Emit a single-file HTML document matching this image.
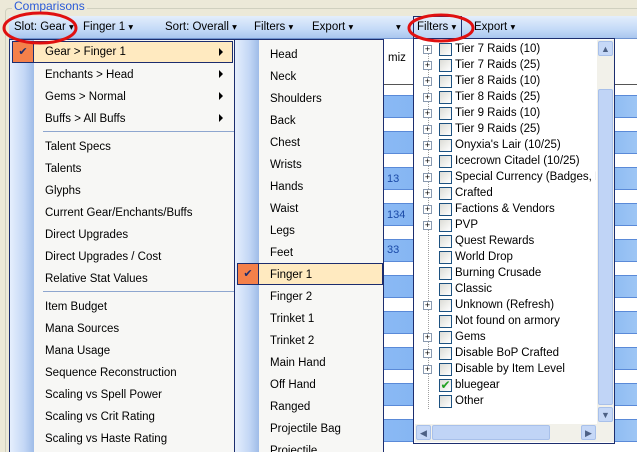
<!DOCTYPE html>
<html style="width:637px;height:452px;overflow:hidden"><head><style>
*{margin:0;padding:0;box-sizing:border-box}
body{width:637px;height:452px;overflow:hidden;background:#ece9d8;font-family:"Liberation Sans",sans-serif;font-size:11.5px;position:relative}
.abs{position:absolute}
.tb{left:9px;top:16px;width:628px;height:23px;background:linear-gradient(#e3eefc,#c4daf7 60%,#a9c6ef);border-bottom:1px solid #6f93cf}
.tb span{position:absolute;top:5px;color:#000;white-space:nowrap}
.grid{left:383px;top:39px;width:254px;height:413px;background:#fff;border-left:1px solid #7f9db9}
.band{position:absolute;left:0;width:254px;height:23px;background:linear-gradient(90deg,#8ab9f4,#6fa6ec 70%,#9ec6f5);border-top:1px solid #5a8ad8;border-bottom:1px solid #5a8ad8}
.menu{background:#f7f7f5;border:1px solid #1c2d6e;border-bottom:none}
.strip{position:absolute;left:0;top:0;bottom:0;width:24px;background:linear-gradient(90deg,#e6effd,#c3d7f5 60%,#9fbce8)}
.it{position:absolute;white-space:nowrap;color:#000;padding-top:2px}
.sep{position:absolute;height:1px;background:#8ea6cf}
.hl{position:absolute;background:#ffeac0;border:1px solid #1c2d6e}
.ck{position:absolute;background:#f4804a;border:1px solid #1c2d6e;color:#1c2d6e;text-align:center;font-size:11px;line-height:20px}
.arr{position:absolute;width:0;height:0;border-top:4px solid transparent;border-bottom:4px solid transparent;border-left:4px solid #000}
.fl{left:413px;top:38px;width:202px;height:406px;background:#fff;border:1px solid #1c2d6e}
.fr{position:absolute;left:0;height:16px;width:182px;white-space:nowrap;overflow:hidden}
.pl{position:absolute;left:9px;top:4px;width:9px;height:9px;border:1px solid #8a9ab0;background:#fff;font-size:9px;line-height:7px;text-align:center;color:#000}
.cb{position:absolute;left:25px;top:2px;width:13px;height:13px;border:1px solid #1c5180;background:linear-gradient(135deg,#dcdcd6,#fff)}
.ft{position:absolute;left:41px;top:2px}
</style></head><body>
<div class="abs" style="left:5px;top:8px;width:640px;height:450px;border:1px solid #d0d0bf;border-radius:4px"></div>
<div class="abs" style="left:12px;top:0px;color:#2a5ad8;background:#ece9d8;padding:0 2px;font-size:12px;line-height:12px">Comparisons</div>
<div class="abs tb">
<span style="left:5px">Slot: Gear <small>▾</small></span>
<span style="left:74px">Finger 1 <small>▾</small></span>
<span style="left:156px">Sort: Overall <small>▾</small></span>
<span style="left:245px">Filters <small>▾</small></span>
<span style="left:303px">Export <small>▾</small></span>
<span style="left:387px"><small>▾</small></span>
<span style="left:404px;top:0;width:49px;height:23px;border:1px solid #1c2d6e;background:linear-gradient(#e3eefc,#b9d2f3)"></span>
<span style="left:408px">Filters <small>▾</small></span>
<span style="left:465px">Export <small>▾</small></span>
</div>
<div class="abs grid">
<div class="abs" style="left:4px;top:13px">miz</div>
<div class="abs" style="left:0;top:45px;width:254px;height:1px;background:#555"></div>
<div class="band" style="top:56px"></div><div class="band" style="top:92px"></div><div class="band" style="top:128px"></div><div class="band" style="top:164px"></div><div class="band" style="top:200px"></div><div class="band" style="top:236px"></div><div class="band" style="top:272px"></div><div class="band" style="top:308px"></div><div class="band" style="top:344px"></div><div class="band" style="top:380px"></div>
<div class="abs" style="left:3px;top:134px;color:#1a4aa8;font-size:11px">13</div>
<div class="abs" style="left:3px;top:170px;color:#1a4aa8;font-size:11px">134</div>
<div class="abs" style="left:3px;top:205px;color:#1a4aa8;font-size:11px">33</div>
</div>
<!-- left menu -->
<div class="abs menu" style="left:9px;top:39px;width:226px;height:413px">
<div class="strip"></div>
<div class="hl" style="left:2px;top:1px;width:221px;height:22px"></div>
<div class="ck" style="left:2px;top:1px;width:22px;height:22px">✔</div>
<div class="it" style="left:35px;top:4px">Gear &gt; Finger 1</div><div class="arr" style="left:209px;top:8px"></div>
<div class="it" style="left:35px;top:27px">Enchants &gt; Head</div><div class="arr" style="left:209px;top:30px"></div>
<div class="it" style="left:35px;top:49px">Gems &gt; Normal</div><div class="arr" style="left:209px;top:52px"></div>
<div class="it" style="left:35px;top:71px">Buffs &gt; All Buffs</div><div class="arr" style="left:209px;top:74px"></div>
<div class="sep" style="left:33px;top:91px;width:191px"></div>
<div class="it" style="left:35px;top:99px">Talent Specs</div>
<div class="it" style="left:35px;top:121px">Talents</div>
<div class="it" style="left:35px;top:143px">Glyphs</div>
<div class="it" style="left:35px;top:165px">Current Gear/Enchants/Buffs</div>
<div class="it" style="left:35px;top:187px">Direct Upgrades</div>
<div class="it" style="left:35px;top:209px">Direct Upgrades / Cost</div>
<div class="it" style="left:35px;top:231px">Relative Stat Values</div>
<div class="sep" style="left:33px;top:251px;width:191px"></div>
<div class="it" style="left:35px;top:259px">Item Budget</div>
<div class="it" style="left:35px;top:281px">Mana Sources</div>
<div class="it" style="left:35px;top:303px">Mana Usage</div>
<div class="it" style="left:35px;top:325px">Sequence Reconstruction</div>
<div class="it" style="left:35px;top:347px">Scaling vs Spell Power</div>
<div class="it" style="left:35px;top:369px">Scaling vs Crit Rating</div>
<div class="it" style="left:35px;top:391px">Scaling vs Haste Rating</div>
</div>
<!-- right submenu -->
<div class="abs menu" style="left:234px;top:39px;width:150px;height:413px">
<div class="strip"></div>
<div class="it" style="left:35px;top:7px">Head</div>
<div class="it" style="left:35px;top:29px">Neck</div>
<div class="it" style="left:35px;top:51px">Shoulders</div>
<div class="it" style="left:35px;top:73px">Back</div>
<div class="it" style="left:35px;top:95px">Chest</div>
<div class="it" style="left:35px;top:117px">Wrists</div>
<div class="it" style="left:35px;top:139px">Hands</div>
<div class="it" style="left:35px;top:161px">Waist</div>
<div class="it" style="left:35px;top:183px">Legs</div>
<div class="it" style="left:35px;top:205px">Feet</div>
<div class="hl" style="left:2px;top:223px;width:146px;height:22px"></div>
<div class="ck" style="left:2px;top:223px;width:22px;height:22px">✔</div>
<div class="it" style="left:35px;top:227px">Finger 1</div>
<div class="it" style="left:35px;top:249px">Finger 2</div>
<div class="it" style="left:35px;top:271px">Trinket 1</div>
<div class="it" style="left:35px;top:293px">Trinket 2</div>
<div class="it" style="left:35px;top:315px">Main Hand</div>
<div class="it" style="left:35px;top:337px">Off Hand</div>
<div class="it" style="left:35px;top:359px">Ranged</div>
<div class="it" style="left:35px;top:381px">Projectile Bag</div>
<div class="it" style="left:35px;top:403px">Projectile</div>
</div>
<!-- filters dropdown -->
<div class="abs fl">
<div class="abs" style="left:14px;top:8px;height:362px;border-left:1px dotted #a0a0a0"></div>
<div class="fr" style="top:2px"><div class="pl">+</div><div class="cb"></div><div class="ft">Tier 7 Raids (10)</div></div>
<div class="fr" style="top:18px"><div class="pl">+</div><div class="cb"></div><div class="ft">Tier 7 Raids (25)</div></div>
<div class="fr" style="top:34px"><div class="pl">+</div><div class="cb"></div><div class="ft">Tier 8 Raids (10)</div></div>
<div class="fr" style="top:50px"><div class="pl">+</div><div class="cb"></div><div class="ft">Tier 8 Raids (25)</div></div>
<div class="fr" style="top:66px"><div class="pl">+</div><div class="cb"></div><div class="ft">Tier 9 Raids (10)</div></div>
<div class="fr" style="top:82px"><div class="pl">+</div><div class="cb"></div><div class="ft">Tier 9 Raids (25)</div></div>
<div class="fr" style="top:98px"><div class="pl">+</div><div class="cb"></div><div class="ft">Onyxia's Lair (10/25)</div></div>
<div class="fr" style="top:114px"><div class="pl">+</div><div class="cb"></div><div class="ft">Icecrown Citadel (10/25)</div></div>
<div class="fr" style="top:130px"><div class="pl">+</div><div class="cb"></div><div class="ft">Special Currency (Badges, Rir</div></div>
<div class="fr" style="top:146px"><div class="pl">+</div><div class="cb"></div><div class="ft">Crafted</div></div>
<div class="fr" style="top:162px"><div class="pl">+</div><div class="cb"></div><div class="ft">Factions &amp; Vendors</div></div>
<div class="fr" style="top:178px"><div class="pl">+</div><div class="cb"></div><div class="ft">PVP</div></div>
<div class="fr" style="top:194px"><div class="cb"></div><div class="ft">Quest Rewards</div></div>
<div class="fr" style="top:210px"><div class="cb"></div><div class="ft">World Drop</div></div>
<div class="fr" style="top:226px"><div class="cb"></div><div class="ft">Burning Crusade</div></div>
<div class="fr" style="top:242px"><div class="cb"></div><div class="ft">Classic</div></div>
<div class="fr" style="top:258px"><div class="pl">+</div><div class="cb"></div><div class="ft">Unknown (Refresh)</div></div>
<div class="fr" style="top:274px"><div class="cb"></div><div class="ft">Not found on armory</div></div>
<div class="fr" style="top:290px"><div class="pl">+</div><div class="cb"></div><div class="ft">Gems</div></div>
<div class="fr" style="top:306px"><div class="pl">+</div><div class="cb"></div><div class="ft">Disable BoP Crafted</div></div>
<div class="fr" style="top:322px"><div class="pl">+</div><div class="cb"></div><div class="ft">Disable by Item Level</div></div>
<div class="fr" style="top:338px"><div class="cb" style="color:#21a121;font-size:12px;line-height:11px;text-align:center">✔</div><div class="ft">bluegear</div></div>
<div class="fr" style="top:354px"><div class="cb"></div><div class="ft">Other</div></div>
<div class="abs" style="left:183px;top:1px;width:17px;height:384px;background:#f2f1ea"></div>
<div class="abs" style="left:184px;top:2px;width:15px;height:15px;background:#c6d8f7;border:1px solid #a8c0ea;border-radius:2px;color:#4d6185;font-size:9px;text-align:center;line-height:14px">▲</div>
<div class="abs" style="left:184px;top:50px;width:15px;height:316px;background:#c0d4f6;border:1px solid #a8c0ea;border-radius:2px"></div>
<div class="abs" style="left:184px;top:368px;width:15px;height:15px;background:#c6d8f7;border:1px solid #a8c0ea;border-radius:2px;color:#4d6185;font-size:9px;text-align:center;line-height:14px">▼</div>
<div class="abs" style="left:1px;top:385px;width:199px;height:18px;background:#f2f1ea"></div>
<div class="abs" style="left:2px;top:386px;width:15px;height:15px;background:#c6d8f7;border:1px solid #a8c0ea;border-radius:2px;color:#4d6185;font-size:9px;text-align:center;line-height:14px">◀</div>
<div class="abs" style="left:18px;top:386px;width:118px;height:15px;background:#c0d4f6;border:1px solid #a8c0ea;border-radius:2px"></div>
<div class="abs" style="left:167px;top:386px;width:15px;height:15px;background:#c6d8f7;border:1px solid #a8c0ea;border-radius:2px;color:#4d6185;font-size:9px;text-align:center;line-height:14px">▶</div>
</div>
<svg class="abs" style="left:0;top:0" width="637" height="452">
<ellipse cx="40" cy="28" rx="36" ry="15" fill="none" stroke="#e01010" stroke-width="3"/>
<ellipse cx="441" cy="28" rx="32" ry="13" fill="none" stroke="#e01010" stroke-width="3"/>
</svg>
</body></html>
